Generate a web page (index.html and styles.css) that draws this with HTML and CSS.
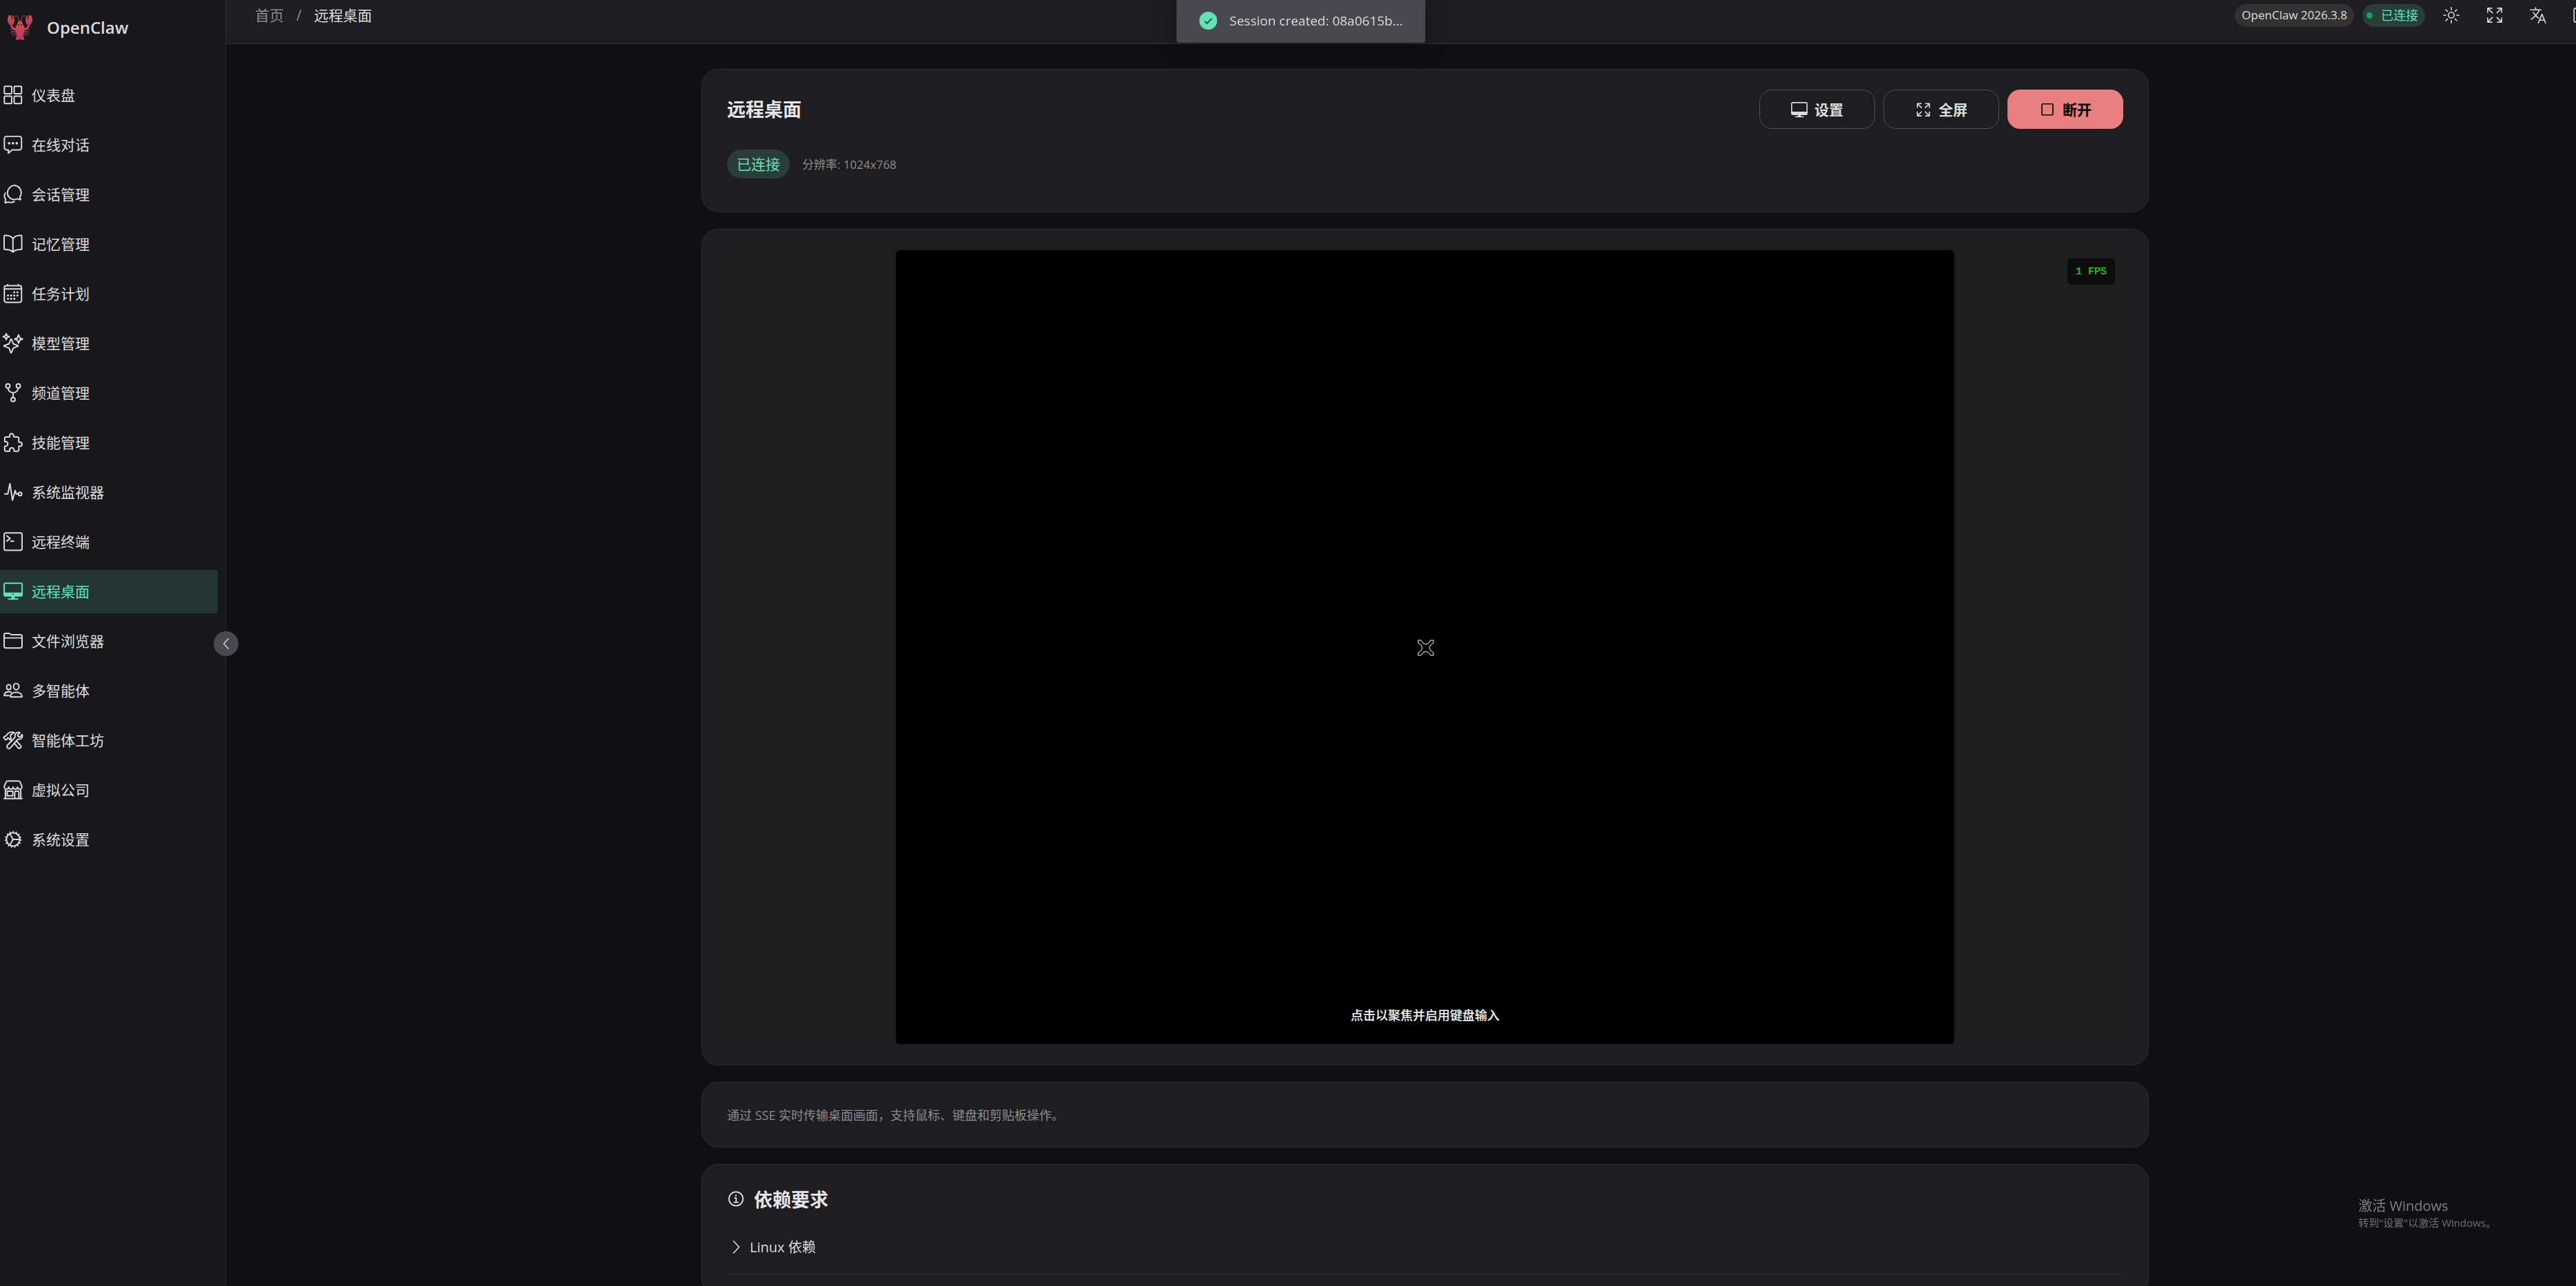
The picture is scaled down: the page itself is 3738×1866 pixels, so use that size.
FILE: index.html
```html
<!DOCTYPE html>
<html lang="zh-CN">
<head>
  <meta charset="UTF-8">
  <title>OpenClaw</title>
  <link rel="stylesheet" href="styles.css">
</head>
<body>
  <div class="app">
    <aside class="sidebar">
      <div class="logo">
        <svg class="logo-icon" viewBox="0 0 36 36">
          <defs>
            <linearGradient id="claw" x1="0" y1="0" x2="0" y2="1">
              <stop offset="0" stop-color="#cf5a40"/>
              <stop offset="1" stop-color="#b83070"/>
            </linearGradient>
          </defs>
          <g fill="none" stroke="#c04a55" stroke-width="1">
            <path d="M16 9c0-5-1-8-3-8s-2 1-2 2M20 9c0-5 1-8 3-8s2 1 2 2"/>
            <path d="M5 14c1 5 4 6 8 7M31 14c-1 5-4 6-8 7" stroke-width="3"/>
            <path d="M13 21l-7-1-1 2M13 23l-7 1-1 2M13 25l-6 2v2M14 26l-5 4M23 21l7-1 1 2M23 23l7 1 1 2M23 25l6 2v2M22 26l5 4"/>
          </g>
          <path fill="url(#claw)" d="M3 0L1 2c-2 5-1 11 4 13 5-1 6-6 4-12L8 0H7v6H6L5 0H4zM33 0l2 2c2 5 1 11-4 13-5-1-6-6-4-12l1-3h1v6h1l1-6h1z"/>
          <path fill="url(#claw)" d="M18 8c3 0 4 4 5 7 3 3 2 8 0 11v5l1 2v3h-3l-3-1-3 1h-3v-3l1-2v-5c-2-3-3-8 0-11 1-3 2-7 5-7z"/>
          <circle cx="16" cy="14" r="1" fill="#222"/><circle cx="20" cy="14" r="1" fill="#222"/>
        </svg>
        <span>OpenClaw</span>
      </div>
      <nav class="menu">
        <a class="menu-item" href="#">
          <svg class="icon" viewBox="0 0 512 512"><rect x="24" y="24" width="196" height="196" rx="24"/><rect x="284" y="24" width="196" height="196" rx="24"/><rect x="24" y="284" width="196" height="196" rx="24"/><rect x="284" y="284" width="196" height="196" rx="24"/></svg>
          仪表盘
        </a>
        <a class="menu-item" href="#">
          <svg class="icon" viewBox="0 0 512 512"><path d="M420 34H84a60 60 0 00-60 60v238a60 60 0 0060 60h46v86l100-84a8 8 0 015-2h185a60 60 0 0060-60V94a60 60 0 00-60-60z"/><g class="solid"><circle cx="150" cy="216" r="34"/><circle cx="252" cy="216" r="34"/><circle cx="354" cy="216" r="34"/></g></svg>
          在线对话
        </a>
        <a class="menu-item" href="#">
          <svg class="icon" viewBox="0 0 512 512"><path d="M436 330c-1-4 1-9 3-12a34 34 0 012-3A170 170 0 00472 212c0-98-80-194-182-194-88 0-162 80-180 160a168 168 0 00-4 36c0 98 79 180 181 180 16 0 38-5 50-8s24-8 27-9a27 27 0 0120 0l60 21a14 14 0 004 1 8 8 0 008-8 13 13 0 00-1-3z"/><path d="M48 222a156 156 0 007 164c2 4 4 7 3 9s-13 78-13 78a8 8 0 0011 9l60-23a16 16 0 0113 0c20 8 42 12 65 12A170 170 0 00288 446"/></svg>
          会话管理
        </a>
        <a class="menu-item" href="#">
          <svg class="icon" viewBox="0 0 512 512"><path d="M252 130c16-73 76-100 208-102a26 26 0 0126 26v334a16 16 0 01-16 16c-138 0-187 30-218 68-30-38-80-68-218-68-10 0-16-8-16-18V54a26 26 0 0126-26c132 2 192 29 208 102zM252 130v334"/></svg>
          记忆管理
        </a>
        <a class="menu-item" href="#">
          <svg class="icon" viewBox="0 0 512 512"><rect x="24" y="44" width="456" height="444" rx="52"/><path d="M112 16v28M392 16v28M480 134H24"/><g class="solid"><circle cx="288" cy="220" r="28"/><circle cx="372" cy="220" r="28"/><circle cx="120" cy="306" r="28"/><circle cx="204" cy="306" r="28"/><circle cx="288" cy="306" r="28"/><circle cx="372" cy="306" r="28"/><circle cx="120" cy="392" r="28"/><circle cx="204" cy="392" r="28"/><circle cx="288" cy="392" r="28"/></g></svg>
          任务计划
        </a>
        <a class="menu-item" href="#">
          <svg class="icon" viewBox="0 0 512 512"><path d="M260 270l-48-120a9 9 0 00-17 0l-45 120a9 9 0 01-5 5L16 320a9 9 0 000 16l129 46a9 9 0 015 5l45 120a9 9 0 0017 0l48-120a9 9 0 015-5l121-46a9 9 0 000-16l-121-45a9 9 0 01-5-5zM98 60L74 0 50 60-8 82l58 22 24 60 24-60 58-22zM434 118L402 36l-31 82-75 28 75 28 31 80 32-80 74-28z"/></svg>
          模型管理
        </a>
        <a class="menu-item" href="#">
          <svg class="icon" viewBox="0 0 512 512"><circle cx="118" cy="72" r="54"/><circle cx="394" cy="72" r="54"/><circle cx="256" cy="432" r="54"/><path d="M256 252v124M118 128c0 82 75 124 138 124M394 128c0 82-75 124-138 124"/></svg>
          频道管理
        </a>
        <a class="menu-item" href="#">
          <svg class="icon" viewBox="0 0 512 512"><path d="M438 246h-30a2 2 0 01-2-2v-95a41 41 0 00-41-41h-91a2 2 0 01-2-2V76c0-29-24-54-53-54a54 54 0 00-53 54v30a2 2 0 01-2 2H74a42 42 0 00-42 42v82a2 2 0 002 2h27c31 0 56 28 56 60 0 31-25 60-56 60H34a2 2 0 00-2 2v92a42 42 0 0042 42h88a2 2 0 002-2v-31c0-32 26-58 58-59 31-1 60 22 60 53v37a2 2 0 002 2h82a41 41 0 0041-41v-92a2 2 0 012-2h31c29 0 53-24 53-54s-24-51-55-51z"/></svg>
          技能管理
        </a>
        <a class="menu-item" href="#">
          <svg class="icon" viewBox="0 0 512 512"><path d="M32 306h84L172 32l68 440 72-256 30 90h56"/><circle cx="442" cy="306" r="44"/></svg>
          系统监视器
        </a>
        <a class="menu-item" href="#">
          <svg class="icon" viewBox="0 0 512 512"><rect x="18" y="24" width="476" height="460" rx="48"/><path d="M88 100l90 70-90 70M196 242h72"/></svg>
          远程终端
        </a>
        <a class="menu-item active" href="#">
          <svg class="icon" viewBox="0 0 512 512"><rect x="18" y="40" width="476" height="340" rx="32"/><path class="solid" fill-rule="evenodd" d="M18 290v60c0 17 15 32 32 32h412c17 0 32-15 32-32v-60zM256 316a17 17 0 11-1 34 17 17 0 011-34z"/><path class="solid" d="M304 460l-10-78h-76l-10 78z"/><path d="M376 460H136"/></svg>
          远程桌面
        </a>
        <a class="menu-item" href="#">
          <svg class="icon" viewBox="0 0 512 512"><path d="M446 442H66a48 48 0 01-48-48V96a40 40 0 0140-40h84a40 40 0 0122 7l32 20a40 40 0 0022 7h228a48 48 0 0148 48v256a48 48 0 01-48 48zM18 176h476"/></svg>
          文件浏览器
        </a>
        <a class="menu-item" href="#">
          <svg class="icon" viewBox="0 0 512 512"><path d="M412 150c-3 48-36 84-72 84s-69-36-72-84c-3-50 29-84 72-84s75 35 72 84zM340 300c-72 0-142 36-158 106-2 9 4 18 13 18h286c9 0 15-9 13-18-17-71-85-106-154-106zM196 166c-2 38-28 66-56 66s-54-28-56-66c-2-40 22-66 56-66s58 27 56 66zM206 300c-20-9-42-14-66-14-54 0-106 28-120 84-2 8 2 18 11 18h115"/></svg>
          多智能体
        </a>
        <a class="menu-item" href="#">
          <svg class="icon" viewBox="0 0 512 512"><path d="M448 168a27 27 0 01-38 0l-23-23a27 27 0 010-38l51-51c-33-14-79-6-109 24-20 20-23 43-19 69 3 14-2 28-12 38L107 388a53 53 0 1075 75l183-216c10-10 23-16 37-14 25 4 51-1 70-20 30-30 37-74 24-106z"/><path d="M224 270l-34-40c-6-7-6-14 0-20l8-8c8-8 4-18-4-26-18-18-12-48 8-66 32-28 58-42 92-48C220 24 150 48 110 86c-14 14-22 26-30 44-6 12-18 16-30 18-8 2-16 6-22 12l-18 18c-6 6-6 14 0 20l46 46c6 6 14 6 20 0l18-18c6-6 10-12 12-20 4-12 16-12 26-4l52 48M288 340l96 116a46 46 0 0066-66l-102-106"/></svg>
          智能体工坊
        </a>
        <a class="menu-item" href="#">
          <svg class="icon" viewBox="0 0 512 512"><path d="M460 240v246M52 240v246M18 488h476M394 24H118c-23 0-40 12-50 32L24 156c-16 46 18 84 56 84 32 0 58-26 58-56 0 30 26 56 59 56s59-26 59-56c0 30 26 56 59 56s59-26 59-56c0 30 26 56 58 56 38 0 72-38 56-84L444 56c-10-20-27-32-50-32zM100 292h148v122H100zM300 486V316a24 24 0 0124-24h60a24 24 0 0124 24v170"/></svg>
          虚拟公司
        </a>
        <a class="menu-item" href="#">
          <svg class="icon" viewBox="0 0 512 512"><circle cx="256" cy="256" r="176"/><circle cx="256" cy="256" r="200" stroke-width="46" stroke-dasharray="32 52" stroke-linecap="butt"/><path d="M256 256h176M256 256l-88-152M256 256l-88 152"/><circle class="solid" cx="256" cy="256" r="24"/></svg>
          系统设置
        </a>
      </nav>
      <button class="collapse-button" aria-label="收起菜单">
        <svg class="icon" viewBox="0 0 512 512"><path d="M340 70L170 256l170 186"/></svg>
      </button>
    </aside>

    <div class="content">
      <header class="header">
        <div class="breadcrumb">
          <a href="#">首页</a>
          <span>/</span>
          <b>远程桌面</b>
        </div>
        <div class="header-right">
          <span class="version">OpenClaw 2026.3.8</span>
          <span class="status"><i></i>已连接</span>
          <div class="tools">
            <button aria-label="主题"><svg class="icon" viewBox="0 0 512 512"><circle cx="256" cy="256" r="90"/><path d="M256 16v72M256 424v72M496 256h-72M88 256H16M426 86l-50 50M136 376l-50 50M426 426l-50-50M136 136L86 86"/></svg></button>
            <button aria-label="全屏"><svg class="icon" viewBox="0 0 512 512"><path d="M170 40H40v130M342 40h130v130M170 472H40V342M342 472h130V342M50 50l135 135M462 50L327 185M50 462l135-135M462 462L327 327"/></svg></button>
            <button aria-label="语言"><svg class="icon" viewBox="0 0 512 512"><path d="M16 90h330M180 24v66M288 90c-30 110-120 210-244 290M110 170c40 80 100 140 160 180M264 496l112-270 112 270M300 410h152"/></svg></button>
            <button aria-label="更多"><svg class="icon" viewBox="0 0 512 512"><rect x="24" y="40" width="464" height="432" rx="56"/></svg></button>
          </div>
        </div>
      </header>

      <main class="page">
        <section class="card">
          <div class="card-top">
            <h1>远程桌面</h1>
            <div class="actions">
              <button class="btn">
                <svg class="icon" viewBox="0 0 512 512"><rect x="18" y="40" width="476" height="370" rx="32"/><path class="solid" d="M18 320v56c0 17 15 32 32 32h412c17 0 32-15 32-32v-56zM304 480l-10-78h-76l-10 78z"/><path d="M376 480H136"/></svg>
                设置
              </button>
              <button class="btn">
                <svg class="icon" viewBox="0 0 512 512"><path d="M190 70H70v120M322 70h120v120M190 450H70V330M322 450h120V330M75 75l120 120M437 75L317 195M75 445l120-120M437 445L317 325"/></svg>
                全屏
              </button>
              <button class="btn btn-danger">
                <svg class="icon" viewBox="0 0 512 512"><rect x="86" y="80" width="340" height="340" rx="24"/></svg>
                断开
              </button>
            </div>
          </div>
          <div class="info">
            <span class="tag">已连接</span>
            <span class="resolution">分辨率: 1024x768</span>
          </div>
        </section>

        <section class="card screen-card">
          <div class="screen">
            <div class="canvas">
              <svg class="cursor" viewBox="0 0 24 24"><path d="M1 1h4l3 4 4 2 4-2 3-4h4v4l-4 3-2 4 2 4 4 3v4h-4l-3-4-4-2-4 2-3 4H1v-4l4-3 2-4-2-4-4-3z"/></svg>
              <p class="hint">点击以聚焦并启用键盘输入</p>
            </div>
            <span class="fps">1 FPS</span>
          </div>
        </section>

        <section class="card note">
          <p>通过 SSE 实时传输桌面画面，支持鼠标、键盘和剪贴板操作。</p>
        </section>

        <section class="card deps">
          <h2>
            <svg class="icon" viewBox="0 0 512 512"><circle cx="256" cy="226" r="200"/><path d="M220 200h40v124M206 328h104"/><circle class="solid" cx="252" cy="130" r="24"/></svg>
            依赖要求
          </h2>
          <button class="collapse-item">
            <svg class="icon" viewBox="0 0 512 512"><path d="M180 60l170 186-170 186"/></svg>
            Linux 依赖
          </button>
        </section>
      </main>
    </div>
  </div>

  <div class="toast">
    <svg viewBox="0 0 26 26"><circle cx="13" cy="13" r="13"/><path d="M8 14l3 3 7-7"/></svg>
    Session created: 08a0615b...
  </div>

  <div class="watermark">
    <p>激活 Windows</p>
    <small>转到"设置"以激活 Windows。</small>
  </div>
</body>
</html>
```
FILE: styles.css
```css
* {
  box-sizing: border-box;
}
body {
  margin: 0;
  height: 100vh;
  overflow: hidden;
  background-color: #101014;
  color: #dcdcdd;
  font-family: "Open Sans", "Noto Sans CJK SC", sans-serif;
  font-size: 21px;
  line-height: 32px;
}
h1, h2, p {
  margin: 0;
}
a {
  color: inherit;
  text-decoration: none;
}
button {
  font: inherit;
  color: inherit;
  background: none;
  border: none;
  padding: 0;
  cursor: pointer;
}
.icon {
  display: block;
  flex: none;
  width: 24px;
  height: 24px;
  fill: none;
  stroke: currentColor;
  stroke-width: 34;
  stroke-linecap: round;
  stroke-linejoin: round;
}
.icon .solid {
  fill: currentColor;
  stroke: none;
}
/* wider than the window, the right edge scrolls out of view */
.app {
  display: flex;
  width: calc(100% + 70px);
  height: 100vh;
}

/* sidebar */
.sidebar {
  position: relative;
  flex: none;
  width: 328px;
  background-color: #18181c;
  border-right: 1px solid #2d2d30;
}
.logo {
  display: flex;
  align-items: center;
  gap: 21px;
  height: 80px;
  padding-left: 11px;
  font-size: 24px;
  font-weight: 600;
}
.logo-icon {
  width: 36px;
  height: 36px;
}
.menu {
  display: flex;
  flex-direction: column;
  gap: 9px;
  padding: 27px 11px 0 0;
}
.menu-item {
  display: flex;
  align-items: center;
  gap: 13px;
  height: 63px;
  padding: 0 0 1px 5px;
  border-radius: 0 4px 4px 0;
}
.menu-item .icon {
  width: 28px;
  height: 28px;
  overflow: visible;
  stroke-width: 36;
}
.menu-item.active {
  background-color: #233633;
  color: #63e2b7;
}
.collapse-button {
  position: absolute;
  top: 50%;
  right: -19px;
  width: 36px;
  height: 36px;
  margin-top: -17px;
  padding: 8px;
  border-radius: 50%;
  background-color: #48484e;
}
.collapse-button .icon {
  width: 20px;
  height: 20px;
}

/* header */
.content {
  flex: 1;
  min-width: 0;
}
.header {
  display: flex;
  align-items: center;
  justify-content: space-between;
  height: 64px;
  padding: 0 50px 19px 42px;
  background-color: #1e1e22;
  border-bottom: 1px solid #313134;
}
.breadcrumb {
  display: flex;
  gap: 18px;
  color: #8c8c8e;
}
.breadcrumb b {
  color: #dcdcdd;
  font-weight: 400;
}
.header-right {
  display: flex;
  align-items: center;
  gap: 12px;
}
.version,
.status {
  height: 33px;
  border-radius: 17px;
  font-size: 18px;
}
.version {
  padding: 0 10px;
  font-size: 17px;
  background-color: #323232;
}
.status {
  display: flex;
  align-items: center;
  gap: 12px;
  padding: 0 10px 0 6px;
  background-color: #2a3d3b;
  color: #63e2b7;
}
.status i {
  width: 9px;
  height: 9px;
  border-radius: 50%;
  background-color: #18a058;
}
.tools {
  display: flex;
  gap: 39px;
  padding-left: 14px;
}

/* cards */
.page {
  display: flex;
  flex-direction: column;
  gap: 24px;
  max-width: 2100px;
  margin: 0 auto;
  padding-top: 36px;
}
.card {
  padding: 29px 36px;
  background-color: #1e1e22;
  border: 1px solid #2d2d30;
  border-radius: 24px;
}
.card-top {
  display: flex;
  align-items: center;
  justify-content: space-between;
}
h1,
h2 {
  font-size: 27px;
  font-weight: 600;
  color: #e6e6e7;
}
.actions {
  display: flex;
  gap: 12px;
}
.btn {
  display: flex;
  align-items: center;
  justify-content: center;
  gap: 10px;
  width: 168px;
  height: 57px;
  border: 1px solid #515155;
  border-radius: 18px;
  font-weight: 700;
}
.btn-danger {
  background-color: #e88080;
  border-color: #e88080;
  color: #000;
}
.info {
  display: flex;
  align-items: center;
  gap: 18px;
  padding: 30px 0 19px;
}
.tag {
  height: 42px;
  padding: 0 14px;
  border-radius: 21px;
  background-color: #2a3d3b;
  color: #63e2b7;
  line-height: 42px;
}
.resolution {
  padding-top: 2px;
  color: #8c8c8e;
  font-size: 17px;
}
.screen-card {
  padding: 30px 36px;
}
.screen {
  position: relative;
  border-radius: 12px;
  background-color: #1e1e1e;
}
.canvas {
  position: relative;
  width: 1536px;
  max-width: 100%;
  aspect-ratio: 4 / 3;
  margin: 0 auto;
  border-radius: 6px;
  background-color: #000;
}
.cursor {
  position: absolute;
  top: 50%;
  left: 50%;
  width: 24px;
  height: 24px;
  margin: -11px;
  fill: none;
  stroke: #fff;
  stroke-width: 1;
}
.hint {
  position: absolute;
  bottom: 26px;
  width: 100%;
  text-align: center;
  color: #fff;
  font-size: 18px;
  font-weight: 500;
}
.fps {
  position: absolute;
  top: 12px;
  right: 12px;
  padding: 4px 12px 2px;
  border-radius: 6px;
  background-color: #0c0c0c;
  color: #0f0;
  font-family: "Liberation Mono", monospace;
  font-size: 15px;
}
.note {
  padding: 31px 36px 30px;
  color: #8c8c8e;
  font-size: 18px;
}
.deps h2 {
  display: flex;
  align-items: center;
  gap: 13px;
  padding: 6px 0;
}
.deps h2 .icon {
  width: 26px;
  height: 26px;
}
.collapse-item {
  display: flex;
  align-items: center;
  gap: 8px;
  width: 100%;
  padding: 31px 0 23px 1px;
  border-bottom: 1px solid #313134;
  font-size: 20px;
}

/* overlays */
.toast {
  position: fixed;
  top: 0;
  left: calc(50% + 19px);
  transform: translateX(-50%);
  display: flex;
  align-items: center;
  gap: 18px;
  height: 62px;
  padding: 0 33px 2px;
  border-radius: 0 0 4px 4px;
  background-color: #48484e;
  box-shadow: 0 6px 32px rgba(0, 0, 0, 0.4);
  font-size: 19px;
  white-space: nowrap;
}
.toast svg {
  width: 26px;
  height: 26px;
  fill: #63e2b7;
}
.toast path {
  fill: none;
  stroke: #48484e;
  stroke-width: 2;
}
.watermark {
  position: fixed;
  right: 116px;
  bottom: 80px;
  color: #808082;
  line-height: 24px;
}
.watermark p {
  font-size: 20px;
}
.watermark small {
  display: block;
  color: #727275;
  font-size: 15px;
}
```
